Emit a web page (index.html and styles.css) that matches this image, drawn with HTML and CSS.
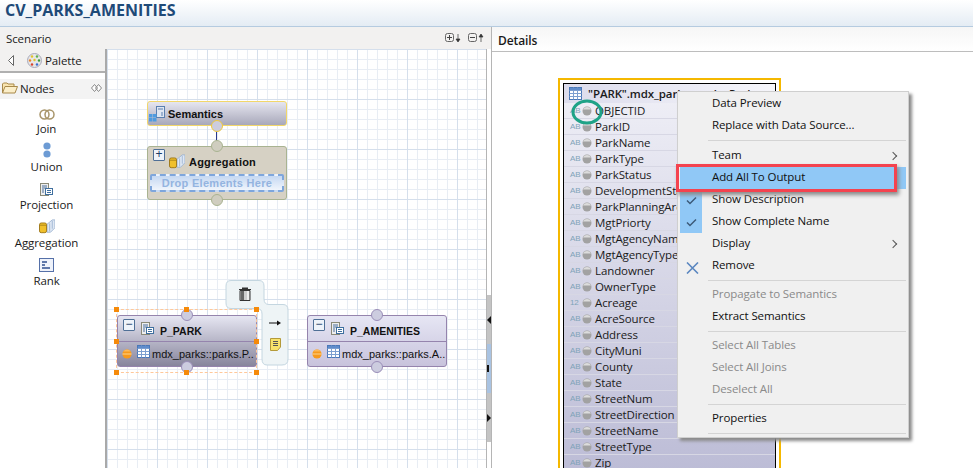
FILE: index.html
```html
<!DOCTYPE html>
<html lang="en">

<head>
   <meta charset="UTF-8">
   <title>CV_PARKS_AMENITIES</title>
   <link rel="stylesheet" href="styles.css">
</head>

<body>
   <svg class="defs" width="0" height="0">
      <symbol id="tbl" viewBox="0 0 13 13">
         <rect x="0.5" y="0.5" width="12" height="12" fill="#fff" stroke="#4a78b8"/>
         <path d="M0.5 3.5H12.5M0.5 6.5H12.5M0.5 9.5H12.5M4.5 0.5V12.5M8.5 0.5V12.5" stroke="#7c9fd0" fill="none"/>
         <rect x="1" y="1" width="11" height="2" fill="#5f8ccb"/>
      </symbol>
      <symbol id="proj" viewBox="0 0 13 13">
         <rect x="0.5" y="0.5" width="8" height="12" fill="#eee" stroke="#8a8a78"/>
         <path d="M2 3H7M2 5H7M2 7H4M2 9H4" stroke="#4a6f9c" fill="none"/>
         <rect x="5.5" y="5.5" width="7" height="6" fill="#fff" stroke="#3f6f9f"/>
         <path d="M7 7.5H11M7 9.5H11" stroke="#3f6f9f" fill="none"/>
      </symbol>
      <symbol id="agg" viewBox="0 0 18 17">
         <path d="M9 6L15 1H18V10L13 15H9Z" fill="#dfe8f4" stroke="#9db4d2"/>
         <path d="M12 5V14M15 2V11" stroke="#9db4d2" fill="none"/>
         <rect x="0.5" y="4.5" width="8" height="11" rx="2" fill="#f0c02c" stroke="#97700f"/>
         <path d="M1 7H8" stroke="#a57f14" fill="none"/>
      </symbol>
      <symbol id="dash" viewBox="0 0 12 12">
         <circle cx="6" cy="6" r="5.5" fill="#f79a1d"/>
         <path d="M0.500 6H11.500" stroke="#ffe0a8"/>
         <path d="M1.500 3A5.500 5.500 0 0 1 10.500 3Z" fill="#fbb95a"/>
      </symbol>
      <symbol id="ball" viewBox="0 0 10 10">
         <circle cx="5" cy="5" r="4.5" fill="#a2a2a2"/>
         <path d="M1 3.5A4.5 4.5 0 0 1 9 3.5Z" fill="#dcdcdc"/>
      </symbol>
   </svg>

   <div class="title">CV_PARKS_AMENITIES</div>

   <div class="main">
      <div class="scenario">
         <div class="bar">
            <span class="barName">Scenario</span>
            <span class="barBtns">
               <svg width="17" height="10" viewBox="0 0 17 10"><rect x="0.5" y="0.5" width="8" height="8" rx="2" fill="none" stroke="#666"/><path d="M2 4.500H7M4.500 2V7" stroke="#444"/><path d="M13 1V6M11 6H15L13 9Z" fill="#333" stroke="#333" stroke-width="0.7"/></svg>
               <svg width="17" height="10" viewBox="0 0 17 10"><rect x="0.5" y="0.5" width="8" height="8" rx="2" fill="none" stroke="#666"/><path d="M2 4.500H7" stroke="#444"/><path d="M13 9V4M11 4H15L13 1Z" fill="#333" stroke="#333" stroke-width="0.7"/></svg>
            </span>
         </div>
         <div class="scenarioBody">
            <div class="palette">
               <div class="paletteHead">
                  <svg width="6" height="11" viewBox="0 0 6 11"><path d="M5.500 0.500L0.500 5.500L5.500 10.500Z" fill="#fff" stroke="#666"/></svg>
                  <svg class="paletteIcon" width="15" height="15" viewBox="0 0 15 15">
                     <circle cx="7.500" cy="7.500" r="7" fill="#e6e6e6" stroke="#aab"/>
                     <circle cx="5" cy="3.500" r="1.200" fill="#e2c32a"/><circle cx="10" cy="3.500" r="1.200" fill="#5bb24a"/>
                     <circle cx="3" cy="7.500" r="1.200" fill="#e9812a"/><circle cx="7.500" cy="7" r="1.200" fill="#e2c32a"/><circle cx="12" cy="7.500" r="1.200" fill="#3b9a3b"/>
                     <circle cx="5" cy="11.500" r="1.200" fill="#d8402c"/><circle cx="10" cy="11.500" r="1.200" fill="#3a6fd0"/>
                  </svg>
                  <span>Palette</span>
               </div>
               <div class="nodesHead">
                  <svg width="16" height="12" viewBox="0 0 16 12"><path d="M0.500 11V2L1.500 1H5L6 2H12V4" fill="#f8e4b0" stroke="#a8894a"/><path d="M0.500 11L3 4.500H15.500L13 11Z" fill="#fbeec8" stroke="#a8894a"/></svg>
                  <span>Nodes</span>
                  <svg class="nodesPin" width="11" height="8" viewBox="0 0 11 8"><path d="M3.500 0.500L0.500 4L3.500 7.500L6.500 4ZM7.500 0.500L4.500 4L7.500 7.500L10.500 4Z" fill="#fff" stroke="#888"/></svg>
               </div>
               <div class="tool">
                  <svg width="16" height="11" viewBox="0 0 16 11"><circle cx="5.500" cy="5.500" r="4.500" fill="none" stroke="#a8956a" stroke-width="1.500"/><circle cx="10.500" cy="5.500" r="4.500" fill="none" stroke="#a8956a" stroke-width="1.500"/></svg>
                  <span>Join</span>
               </div>
               <div class="tool">
                  <svg width="8" height="16" viewBox="0 0 8 16"><circle cx="4" cy="4" r="3.600" fill="#6d9bd4"/><circle cx="4" cy="12" r="3.600" fill="#6d9bd4"/></svg>
                  <span>Union</span>
               </div>
               <div class="tool">
                  <svg width="13" height="13"><use href="#proj"/></svg>
                  <span>Projection</span>
               </div>
               <div class="tool">
                  <svg width="16" height="15"><use href="#agg"/></svg>
                  <span>Aggregation</span>
               </div>
               <div class="tool">
                  <svg width="15" height="14" viewBox="0 0 15 14"><rect x="0.500" y="0.500" width="14" height="13" fill="#eef2fa" stroke="#5570a8"/><path d="M3 4H8M3 7H6M3 10H11" stroke="#2f4f8f" stroke-width="1.400"/></svg>
                  <span>Rank</span>
               </div>
            </div>

            <div class="canvas">
               <div class="node semantics">
                  <svg width="16" height="16" viewBox="0 0 16 16"><rect x="7.500" y="0.500" width="8" height="11" fill="#dfe6f2" stroke="#5a7fb0"/><path d="M9 3H14M12 7H14M12 9H14" stroke="#5a7fb0"/><rect x="0" y="8" width="3.500" height="3.500" fill="#4f9be0"/><rect x="4" y="8" width="3.500" height="3.500" fill="#4f9be0"/><rect x="0" y="12" width="3.500" height="3.500" fill="#4f9be0"/><rect x="4" y="12" width="3.500" height="3.500" fill="#4f9be0"/></svg>
                  <span>Semantics</span>
                  <i class="port bottom yellow"></i>
               </div>
               <div class="link"></div>
               <div class="node aggregation">
                  <i class="port top tan"></i>
                  <div class="aggHead">
                     <span class="toggle">+</span>
                     <svg width="16" height="15"><use href="#agg"/></svg>
                     <span>Aggregation</span>
                  </div>
                  <div class="dropZone">Drop Elements Here</div>
                  <i class="port bottom tan"></i>
               </div>

               <div class="node viewNode parkNode">
                  <i class="port top"></i>
                  <div class="viewHead">
                     <span class="toggle">−</span>
                     <svg width="13" height="13"><use href="#proj"/></svg>
                     <span>P_PARK</span>
                  </div>
                  <div class="viewSource">
                     <svg width="10" height="10"><use href="#dash"/></svg>
                     <svg class="srcTable" width="13" height="13"><use href="#tbl"/></svg>
                     <span>mdx_parks::parks.P..</span>
                  </div>
                  <i class="port bottom"></i>
               </div>

               <div class="selection">
                  <i class="grip g1"></i><i class="grip g2"></i><i class="grip g3"></i><i class="grip g4"></i>
                  <i class="grip g5"></i><i class="grip g6"></i><i class="grip g7"></i><i class="grip g8"></i>
               </div>

               <svg class="actions" width="66" height="87" viewBox="0 0 66 87">
                  <path d="M6 0.500H34Q39 0.500 39 6V19Q39 24.500 44 24.500H58Q63 24.500 63 30V79Q63 85 57 85H42Q37 85 37 79V34Q37 28.500 32 28.500H6Q1 28.500 1 23V6Q1 0.500 6 0.500Z" fill="#eef4f6" stroke="#c4d6e0"/>
                  <g transform="translate(14 7)">
                     <path d="M0 2H12V3H0ZM3 0.500H9V2H3Z" fill="#333"/>
                     <path d="M1 3.500H11V13.500H1Z" fill="#ccc" stroke="#333"/>
                     <rect x="2" y="4" width="3" height="9" fill="#666"/>
                     <rect x="8" y="4" width="2" height="9" fill="#eee"/>
                  </g>
                  <g transform="translate(44 40)">
                     <path d="M0 3H10" stroke="#111"/>
                     <path d="M8 0.500L12 3L8 5.500Z" fill="#111"/>
                  </g>
                  <g transform="translate(45 58)">
                     <path d="M0.500 0.500H10.500V9L7.500 12.500H0.500Z" fill="#f7e36c" stroke="#b49a3a"/>
                     <path d="M3 3.500H8M3 5.500H8M3 7.500H8" stroke="#555"/>
                  </g>
               </svg>

               <div class="node viewNode amenitiesNode">
                  <i class="port top"></i>
                  <div class="viewHead">
                     <span class="toggle">−</span>
                     <svg width="13" height="13"><use href="#proj"/></svg>
                     <span>P_AMENITIES</span>
                  </div>
                  <div class="viewSource">
                     <svg width="10" height="10"><use href="#dash"/></svg>
                     <svg class="srcTable" width="13" height="13"><use href="#tbl"/></svg>
                     <span>mdx_parks::parks.A..</span>
                  </div>
                  <i class="port bottom"></i>
               </div>
            </div>

            <div class="sash">
               <span class="sashPart"><b class="arrowLeft"></b></span>
               <span class="sashPart sashBlue"><b class="sashDot"></b></span>
               <span class="sashPart"><b class="arrowRight"></b></span>
            </div>
         </div>
      </div>

      <div class="details">
         <div class="detailsBar">Details</div>
         <div class="detailsBody">
            <div class="tableNode">
               <div class="tableInner">
                  <div class="tableHead">
                     <svg width="13" height="13"><use href="#tbl"/></svg>
                     <span>"PARK".mdx_parks::parks.Park</span>
                  </div>
                  <div class="col"><em>AB</em><svg width="10" height="10"><use href="#ball"/></svg><span>OBJECTID</span></div>
                  <div class="col"><em>AB</em><svg width="10" height="10"><use href="#ball"/></svg><span>ParkID</span></div>
                  <div class="col"><em>AB</em><svg width="10" height="10"><use href="#ball"/></svg><span>ParkName</span></div>
                  <div class="col"><em>AB</em><svg width="10" height="10"><use href="#ball"/></svg><span>ParkType</span></div>
                  <div class="col"><em>AB</em><svg width="10" height="10"><use href="#ball"/></svg><span>ParkStatus</span></div>
                  <div class="col"><em>AB</em><svg width="10" height="10"><use href="#ball"/></svg><span>DevelopmentStatus</span></div>
                  <div class="col"><em>AB</em><svg width="10" height="10"><use href="#ball"/></svg><span>ParkPlanningArea</span></div>
                  <div class="col"><em>AB</em><svg width="10" height="10"><use href="#ball"/></svg><span>MgtPriorty</span></div>
                  <div class="col"><em>AB</em><svg width="10" height="10"><use href="#ball"/></svg><span>MgtAgencyName</span></div>
                  <div class="col"><em>AB</em><svg width="10" height="10"><use href="#ball"/></svg><span>MgtAgencyType</span></div>
                  <div class="col"><em>AB</em><svg width="10" height="10"><use href="#ball"/></svg><span>Landowner</span></div>
                  <div class="col"><em>AB</em><svg width="10" height="10"><use href="#ball"/></svg><span>OwnerType</span></div>
                  <div class="col"><em>12</em><svg width="10" height="10"><use href="#ball"/></svg><span>Acreage</span></div>
                  <div class="col"><em>AB</em><svg width="10" height="10"><use href="#ball"/></svg><span>AcreSource</span></div>
                  <div class="col"><em>AB</em><svg width="10" height="10"><use href="#ball"/></svg><span>Address</span></div>
                  <div class="col"><em>AB</em><svg width="10" height="10"><use href="#ball"/></svg><span>CityMuni</span></div>
                  <div class="col"><em>AB</em><svg width="10" height="10"><use href="#ball"/></svg><span>County</span></div>
                  <div class="col"><em>AB</em><svg width="10" height="10"><use href="#ball"/></svg><span>State</span></div>
                  <div class="col"><em>AB</em><svg width="10" height="10"><use href="#ball"/></svg><span>StreetNum</span></div>
                  <div class="col"><em>AB</em><svg width="10" height="10"><use href="#ball"/></svg><span>StreetDirection</span></div>
                  <div class="col"><em>AB</em><svg width="10" height="10"><use href="#ball"/></svg><span>StreetName</span></div>
                  <div class="col"><em>AB</em><svg width="10" height="10"><use href="#ball"/></svg><span>StreetType</span></div>
                  <div class="col"><em>AB</em><svg width="10" height="10"><use href="#ball"/></svg><span>Zip</span></div>
               </div>
            </div>

            <svg class="circleMark" width="32" height="28" viewBox="0 0 32 28"><ellipse cx="16" cy="14" rx="14" ry="11" fill="none" stroke="#1fa387" stroke-width="3"/></svg>

            <div class="menu">
               <div class="item">Data Preview</div>
               <div class="item">Replace with Data Source...</div>
               <div class="sep first"></div>
               <div class="item">Team<b class="more"></b></div>
               <div class="item active">Add All To Output</div>
               <div class="item checked"><svg class="mark" width="11" height="9" viewBox="0 0 11 9"><path d="M1 4.500L4 7.500L10 1.500" fill="none" stroke="#3c5a78" stroke-width="1.500"/></svg>Show Description</div>
               <div class="item checked"><svg class="mark" width="11" height="9" viewBox="0 0 11 9"><path d="M1 4.500L4 7.500L10 1.500" fill="none" stroke="#3c5a78" stroke-width="1.500"/></svg>Show Complete Name</div>
               <div class="item">Display<b class="more"></b></div>
               <div class="item"><svg class="mark" width="13" height="12" viewBox="0 0 13 12"><path d="M1 0.500L12 11.500M12 0.500L1 11.500" fill="none" stroke="#5b87c0" stroke-width="1.600"/></svg>Remove</div>
               <div class="sep"></div>
               <div class="item off">Propagate to Semantics</div>
               <div class="item">Extract Semantics</div>
               <div class="sep"></div>
               <div class="item off">Select All Tables</div>
               <div class="item off">Select All Joins</div>
               <div class="item off">Deselect All</div>
               <div class="sep"></div>
               <div class="item">Properties</div>
               <div class="sep"></div>
            </div>

            <div class="redBox"></div>
         </div>
      </div>
   </div>
</body>

</html>
```

FILE: styles.css
```css
* {
   box-sizing: border-box;
}

html,
body {
   height: 100%;
}

body {
   margin: 0;
   display: flex;
   flex-direction: column;
   overflow: hidden;
   background-color: #fff;
   color: #1a1a1a;
   font: 11.500px "Open Sans", sans-serif;
   letter-spacing: -0.100px;
}

svg {
   flex: none;
}

.defs {
   display: block;
   height: 0;
}

.title {
   flex: none;
   height: 27px;
   padding-left: 5px;
   font: bold 16px/20px "Open Sans", sans-serif;
   letter-spacing: 0;
   color: #1e4a78;
   background: linear-gradient(#fff, #e4ecf4);
   border-bottom: 1px solid #b5cbe0;
}

.main {
   flex: 1;
   display: flex;
   min-height: 0;
}

.scenario {
   width: 491px;
   flex: none;
   display: flex;
   flex-direction: column;
}

.bar {
   height: 22px;
   flex: none;
   display: flex;
   align-items: center;
   justify-content: space-between;
   padding: 0 6px;
   background-color: #f2f1f0;
}

.barBtns {
   display: flex;
   gap: 6px;
}

.scenarioBody {
   flex: 1;
   display: flex;
   min-height: 0;
}

/* palette */
.palette {
   width: 107px;
   flex: none;
   background-color: #fff;
   border-right: 2px solid #a9a9a9;
}

.paletteHead {
   height: 24px;
   display: flex;
   align-items: center;
   padding-left: 8px;
   gap: 13px;
   background-color: #f2f1f0;
   border-bottom: 2px solid #b0b0b0;
}

.paletteHead span {
   margin-left: -10px;
}

.nodesHead {
   height: 20px;
   margin-top: 6px;
   display: flex;
   align-items: center;
   padding: 0 0 2px 2px;
   gap: 2px;
   background-color: #f3f3f3;
}

.nodesPin {
   margin-left: auto;
   margin-right: 3px;
}

.tool {
   height: 38px;
   display: flex;
   flex-direction: column;
   align-items: center;
   justify-content: flex-end;
   line-height: 16px;
   padding-right: 12px;
   gap: 1px;
}

/* canvas */
.canvas {
   position: relative;
   flex: 1;
   overflow: hidden;
   background-color: #fff;
   background-image:
      linear-gradient(to right, #d5dfec 1px, transparent 1px),
      linear-gradient(to bottom, #d5dfec 1px, transparent 1px),
      linear-gradient(to right, #e8edf4 1px, transparent 1px),
      linear-gradient(to bottom, #e8edf4 1px, transparent 1px);
   background-size: 50px 50px, 50px 50px, 10px 10px, 10px 10px;
}

.node {
   position: absolute;
   width: 140px;
   font-family: "Liberation Sans", sans-serif;
   font-size: 11px;
   font-weight: bold;
   letter-spacing: 0;
   color: #111;
}

.semantics {
   left: 40px;
   top: 52px;
   height: 25px;
   display: flex;
   align-items: center;
   gap: 3px;
   padding-left: 1px;
   border: 1px solid #f2d76a;
   border-radius: 3px;
   background: linear-gradient(#e6e6f0, #a8a8ba);
}

.link {
   position: absolute;
   left: 109px;
   top: 78px;
   width: 1px;
   height: 18px;
   background-color: #2a3a8c;
}

.aggregation {
   left: 40px;
   top: 97px;
   height: 54px;
   border: 1px solid #a9b391;
   border-radius: 3px;
   background-color: #d6d1c4;
}

.aggHead {
   height: 27px;
   display: flex;
   align-items: center;
   gap: 4px;
   padding-left: 5px;
   padding-top: 2px;
   letter-spacing: 0.200px;
}

.aggHead .toggle {
   margin-top: -13px;
}

.dropZone {
   height: 18px;
   margin: 0 2px;
   border: 2px dashed #7ea6dc;
   border-radius: 2px;
   background: linear-gradient(#c5d8f2, #f0f5fc);
   color: #94b4e0;
   line-height: 14px;
   text-align: center;
   letter-spacing: 0.300px;
}

.toggle {
   width: 12px;
   height: 12px;
   flex: none;
   border: 1px solid #4f6f96;
   border-radius: 1px;
   background-color: #eef3fa;
   color: #1c3c68;
   font: 12px/9px "Liberation Sans", sans-serif;
   text-align: center;
}

.port {
   position: absolute;
   left: 50%;
   width: 12px;
   height: 12px;
   margin-left: -6px;
   border-radius: 50%;
   border: 1px solid #9a8eb8;
   background-color: #ccccdf;
   z-index: 2;
}

.port.top {
   top: -7px;
}

.port.bottom {
   bottom: -7px;
}

.port.yellow {
   border-color: #f0c93c;
}

.port.tan {
   border-color: #a9b391;
   background-color: #cfcdbf;
}

.viewNode {
   top: 266px;
   height: 52px;
   border: 1px solid #9584ad;
   border-radius: 3px;
}

.parkNode {
   left: 10px;
   background: linear-gradient(#e6e6f2, #87859c);
}

.amenitiesNode {
   left: 200px;
   background: linear-gradient(#e6e6f4, #c8c3dc);
}

.viewHead {
   height: 26px;
   display: flex;
   align-items: center;
   gap: 6px;
   padding-left: 5px;
   font-size: 10.500px;
   border-bottom: 1px solid #9584ad;
}

.viewHead .toggle {
   margin-top: -8px;
}

.viewHead span:last-child {
   padding-top: 5px;
}

.viewSource {
   height: 24px;
   display: flex;
   align-items: center;
   padding-left: 4px;
   overflow: hidden;
   font-weight: normal;
   white-space: nowrap;
}

.srcTable {
   margin: -6px 2px 0 5px;
}

.selection {
   position: absolute;
   left: 9px;
   top: 260px;
   width: 141px;
   height: 64px;
   border: 1px dashed #ffc89a;
   z-index: 3;
}

.grip {
   position: absolute;
   width: 5px;
   height: 5px;
   background-color: #f58a0a;
}

.g1, .g4, .g6 { left: -3px; }
.g2, .g7 { left: 67px; }
.g3, .g5, .g8 { right: -3px; }
.g1, .g2, .g3 { top: -3px; }
.g4, .g5 { top: 29px; }
.g6, .g7, .g8 { bottom: -3px; }

.actions {
   position: absolute;
   left: 118px;
   top: 231px;
}

/* sash between the two parts */
.sash {
   width: 5px;
   flex: none;
   display: flex;
   flex-direction: column;
   justify-content: flex-start;
   padding-top: 246px;
   border-left: 1px solid #b5b5b5;
   background-color: #fff;
}

.sashPart {
   height: 49px;
   display: flex;
   align-items: center;
   background-color: #c4c4c4;
}

.sashBlue {
   background-color: #a9c3e2;
}

.sashDot {
   width: 2px;
   height: 7px;
   background-color: #111;
}

.arrowLeft,
.arrowRight {
   width: 0;
   height: 0;
   border-top: 4px solid transparent;
   border-bottom: 4px solid transparent;
}

.arrowLeft {
   border-right: 4px solid #111;
}

.arrowRight {
   border-left: 4px solid #111;
}

/* details */
.details {
   flex: 1;
   display: flex;
   flex-direction: column;
   min-width: 0;
   border-left: 1px solid #b5b5b5;
}

.detailsBar {
   height: 25px;
   flex: none;
   padding: 5px 0 0 6px;
   font-size: 12px;
   font-weight: 600;
   background: linear-gradient(#f6f6f6, #fff);
   border-bottom: 1px solid #bdbdbd;
}

.detailsBody {
   position: relative;
   flex: 1;
   overflow: hidden;
}

.tableNode {
   position: absolute;
   left: 66px;
   top: 26px;
   width: 223px;
   height: 400px;
   padding: 3px;
   border: 2px solid #f5b800;
   background-color: #fff;
}

.tableInner {
   height: 100%;
   border: 1px solid #000;
   background: linear-gradient(#f0f0f7, #bcbcd6);
}

.tableHead {
   height: 19px;
   display: flex;
   align-items: center;
   gap: 6px;
   padding-left: 5px;
   font-weight: 600;
   background: linear-gradient(to right, #dcdcec, #f6f6fb);
   white-space: nowrap;
}

.col {
   height: 16px;
   display: flex;
   align-items: center;
   padding-left: 6px;
   gap: 2px;
   line-height: 15px;
   border-bottom: 1px solid #d7d7e4;
   white-space: nowrap;
}

.col em {
   width: 10px;
   font: 8px "Liberation Sans", sans-serif;
   color: #7fa3b8;
}

.col span {
   margin-left: 1px;
}

.circleMark {
   position: absolute;
   left: 79px;
   top: 46px;
}

/* context menu */
.menu {
   position: absolute;
   left: 185px;
   top: 39px;
   width: 232px;
   height: 347px;
   padding: 1px 2px;
   border: 1px solid #cfcfcf;
   background-color: #f0f0f0;
   box-shadow: 3px 3px 3px #8a8a8a;
   z-index: 4;
}

.item {
   position: relative;
   height: 22px;
   padding-left: 32px;
   line-height: 20px;
   color: #111;
}

.item.off {
   color: #8a8a8a;
}

.active {
   background-color: #90c8f6;
}

.checked::before {
   content: "";
   position: absolute;
   left: 0;
   top: 0;
   width: 22px;
   height: 22px;
   background-color: #90c8f6;
}

.mark {
   position: absolute;
   left: 6px;
   top: 7px;
}

.more {
   position: absolute;
   right: 10px;
   top: 8px;
   width: 6px;
   height: 6px;
   transform: rotate(45deg);
   border-top: 1px solid #555;
   border-right: 1px solid #555;
}

.sep {
   height: 7px;
   margin-left: 28px;
   padding-top: 3px;
   background: linear-gradient(#d4d4d4, #d4d4d4) no-repeat 0 3px / 100% 1px;
}

.sep.first {
   height: 8px;
}

.redBox {
   position: absolute;
   left: 184px;
   top: 112px;
   width: 221px;
   height: 28px;
   border: 3px solid #f4434f;
   box-shadow: 2px 3px 4px #8a8a8a;
   z-index: 5;
}
```
